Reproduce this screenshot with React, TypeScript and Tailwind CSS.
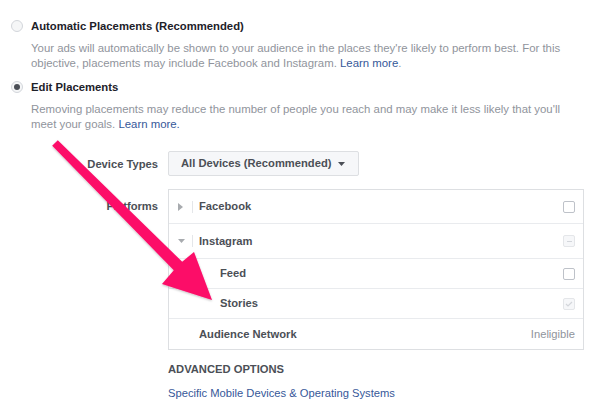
import React from "react";

const ROWS = [
  { label: "Facebook", toggle: "right", h: "h-[34px]", indent: 0, right: "box" },
  { label: "Instagram", toggle: "down", h: "h-[35px]", indent: 0, right: "minus" },
  { label: "Feed", toggle: null, h: "h-[30px]", indent: 2, right: "box" },
  { label: "Stories", toggle: null, h: "h-[30px]", indent: 2, right: "check" },
  { label: "Audience Network", toggle: null, h: "h-[30px]", indent: 1, right: "ineligible" },
] as const;

function Radio({ checked }: { checked?: boolean }) {
  return (
    <span className="mt-[2px] flex h-[12px] w-[12px] shrink-0 items-center justify-center rounded-full border border-[#d3d6db] bg-[#f5f6f7]">
      {checked && <span className="h-[6px] w-[6px] rounded-full bg-[#4b4f56]" />}
    </span>
  );
}

function Toggle({ dir }: { dir: "right" | "down" }) {
  return (
    <div className="flex h-full w-[23px] items-center pl-[9px]">
      {dir === "right" ? (
        <svg width="5" height="8" viewBox="0 0 5 8">
          <path d="M0 0 L5 4 L0 8 Z" fill="#a8abaf" />
        </svg>
      ) : (
        <svg width="7" height="4" viewBox="0 0 7 4">
          <path d="M0 0 L7 0 L3.5 4 Z" fill="#a8abaf" />
        </svg>
      )}
    </div>
  );
}

function RightCell({ kind }: { kind: string }) {
  if (kind === "ineligible") {
    return <span className="mr-[8px] text-[11.2px] text-[#90949c]">Ineligible</span>;
  }
  if (kind === "box") {
    return <span className="mr-[8px] h-[12px] w-[12px] rounded-[2px] border border-[#bec2c9] bg-white" />;
  }
  return (
    <span className="mr-[8px] flex h-[12px] w-[12px] items-center justify-center rounded-[2px] border border-[#e4e6e9] bg-[#f6f7f9]">
      {kind === "minus" ? (
        <span className="h-px w-[5px] bg-[#d3d6db]" />
      ) : (
        <svg width="8" height="6" viewBox="0 0 8 6">
          <path d="M1 3 L3 5 L7 1" fill="none" stroke="#d3d6db" strokeWidth="1.2" />
        </svg>
      )}
    </span>
  );
}

export default function App() {
  return (
    <div className="relative h-[410px] w-[591px] overflow-hidden bg-white font-['Liberation_Sans',Arial,sans-serif] text-[11.2px]">
      {/* Placement choice */}
      <div className="pl-[11px] pr-[8px] pt-[18px]">
        <div className="flex gap-[8px]">
          <Radio />
          <div>
            <div className="text-[11.3px] font-bold leading-[16px] text-[#1d2129]">Automatic Placements (Recommended)</div>
            <p className="mt-[7px] text-[11.4px] leading-[14.5px] text-[#90949c]">
              Your ads will automatically be shown to your audience in the places they're likely to perform best. For this
              objective, placements may include Facebook and Instagram. <span className="text-[#365899]">Learn more</span>.
            </p>
          </div>
        </div>
        <div className="mt-[9px] flex gap-[8px]">
          <Radio checked />
          <div>
            <div className="text-[11.3px] font-bold leading-[16px] text-[#1d2129]">Edit Placements</div>
            <p className="mt-[7px] pr-[20px] text-[11.4px] leading-[14.5px] text-[#90949c]">
              Removing placements may reduce the number of people you reach and may make it less likely that you'll
              meet your goals. <span className="text-[#365899]">Learn more.</span>
            </p>
          </div>
        </div>
      </div>

      {/* Device types and platforms */}
      <div className="mt-[20px] grid grid-cols-[158px_416px] gap-x-[10px]">
        <div className="self-center text-right font-bold leading-[16px] text-[#4b4f56]">Device Types</div>
        <div className="flex h-[25px] w-[191px] items-center gap-[7px] rounded-[2px] border border-[#dddfe2] bg-[#f6f7f9] pl-[12px]">
          <span className="font-bold text-[#4b4f56]">All Devices (Recommended)</span>
          <svg width="7" height="4" viewBox="0 0 7 4">
            <path d="M0 0 L7 0 L3.5 4 Z" fill="#4b4f56" />
          </svg>
        </div>

        <div className="mt-[13px] pt-[9px] text-right font-bold leading-[16px] text-[#4b4f56]">Platforms</div>
        <div className="mt-[13px] border border-[#dddfe2]">
          {ROWS.map((row, i) => (
            <div
              key={row.label}
              className={`flex items-center ${row.h} ${i < ROWS.length - 1 ? "border-b border-[#e9ebee]" : ""}`}
            >
              {row.toggle ? (
                <>
                  <Toggle dir={row.toggle} />
                  <span className="h-[12px] w-px bg-[#e4e6e9]" />
                  <span className="ml-[6px] font-bold text-[#4b4f56]">{row.label}</span>
                </>
              ) : (
                <span className={`font-bold text-[#4b4f56] ${row.indent === 2 ? "pl-[51px]" : "pl-[30px]"}`}>
                  {row.label}
                </span>
              )}
              <div className="ml-auto flex items-center">
                <RightCell kind={row.right} />
              </div>
            </div>
          ))}
        </div>

        <div className="col-start-2 mt-[11px] font-bold leading-[16px] text-[#4b4f56]">ADVANCED OPTIONS</div>
        <div className="col-start-2 mt-[8px] leading-[16px] text-[#365899]">Specific Mobile Devices &amp; Operating Systems</div>
      </div>

      {/* Arrow annotation */}
      <svg className="pointer-events-none absolute left-0 top-0" width="591" height="410" viewBox="0 0 591 410">
        <defs>
          <filter id="sh" x="-10%" y="-10%" width="120%" height="120%">
            <feDropShadow dx="0" dy="1" stdDeviation="1" floodColor="#000" floodOpacity="0.25" />
          </filter>
        </defs>
        <polygon
          points="57.8,140.2 182.2,261.8 194,252 212,300 162,284 173.8,270.2 52.2,145.8"
          fill="#fc0a68"
          filter="url(#sh)"
        />
      </svg>
    </div>
  );
}
